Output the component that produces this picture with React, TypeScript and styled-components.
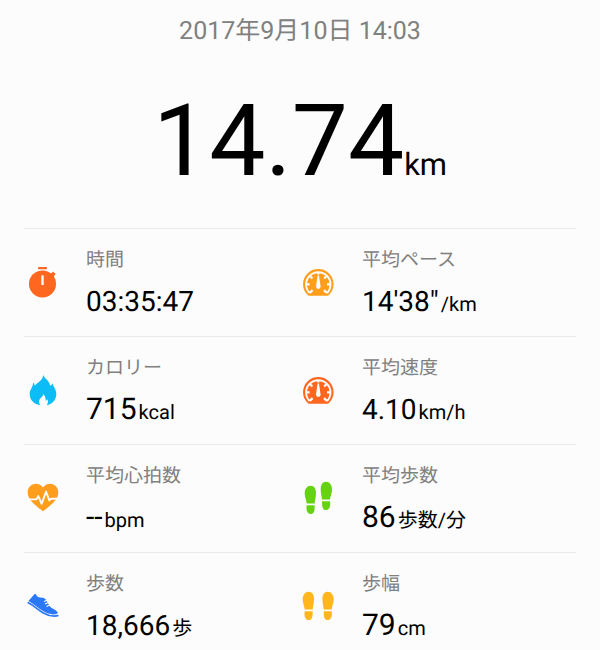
import React from "react";
import styled, { createGlobalStyle } from "styled-components";

const GlobalStyle = createGlobalStyle`
  * { box-sizing: border-box; }
  body {
    margin: 0;
    background: #fcfcfc;
    font-family: Roboto, "Noto Sans CJK JP", sans-serif;
    text-rendering: geometricPrecision;
    color: #000;
  }
`;

const Page = styled.main`
  padding: 14px 24px 0;
`;

const Header = styled.header`
  display: flex;
  flex-direction: column;
  align-items: center;
`;

const DateTime = styled.time`
  font-size: 25px;
  line-height: 36px;
  color: #808080;
`;

const Distance = styled.h1`
  display: flex;
  align-items: baseline;
  margin: 32px 0 26px;
  font-size: 100px;
  line-height: 120px;
  font-weight: 400;
`;

const DistanceUnit = styled.span`
  font-size: 31px;
  line-height: 1;
`;

const Stats = styled.dl`
  display: grid;
  grid-template-columns: 1fr 1fr;
  margin: 0;
`;

const Stat = styled.div`
  display: grid;
  grid-template-columns: 36px 1fr;
  column-gap: 26px;
  align-items: start;
  padding: 16px 0;
  border-top: 1px solid #e9e9e9;

  &:nth-last-child(-n + 2) {
    padding-bottom: 0;
  }
`;

const Icon = styled.svg`
  grid-row: 1 / 3;
  width: 36px;
  height: 36px;
  margin-top: 20px;
`;

const Label = styled.dt`
  font-size: 19px;
  line-height: 30px;
  color: #808080;
`;

const Value = styled.dd<{ $large?: boolean }>`
  display: flex;
  align-items: baseline;
  gap: 2px;
  margin: 8px 0 0;
  font-size: ${(p) => (p.$large ? 30 : 28)}px;
  line-height: 37px;
`;

const Unit = styled.span`
  font-size: 20px;
  line-height: 1;
`;

const BG = "#fcfcfc";

const Stopwatch = () => (
  <Icon viewBox="0 0 36 36" aria-hidden="true">
    <circle cx="18.5" cy="18.9" r="13.5" fill="#ff6620" />
    <rect x="14" y="2" width="9" height="2.3" rx="0.8" fill="#ff6620" />
    <path d="M26 9.5 29.4 7.2 31 8.8 28.8 12.4Z" fill="#ff6620" stroke="#ff6620" strokeLinejoin="round" />
    <rect x="17.3" y="10.3" width="2.4" height="9.7" rx="0.6" fill={BG} />
  </Icon>
);

const Gauge = ({ color }: { color: string }) => (
  <Icon viewBox="0 0 36 36" aria-hidden="true">
    <path d="M8.6 30.7C5.2 28 3 24 3 19.3a15.3 15.3 0 0 1 30.6 0C33.6 24 31.4 28 28 30.7Z" fill={color} />
    <path d="M9.6 28A12.2 12.2 0 1 1 27 28" fill="none" stroke={BG} strokeWidth="1.9" />
    <path
      d="M6.6 19.4H9.6M27 19.4H30M10.2 11.3 12.4 13.5M26.4 11.3 24.2 13.5M18.3 7V9.4M9.8 27.9 12.6 25.1M26.8 27.9 24 25.1"
      stroke={BG}
      strokeWidth="2.2"
      fill="none"
    />
    <path d="M17.6 10.5h1.4L20.6 21.6a2.3 2.3 0 1 1-4.6 0Z" fill={BG} />
  </Icon>
);

const Flame = () => (
  <Icon viewBox="0 0 36 36" aria-hidden="true">
    <path
      fill="#0bbcf6"
      d="M19.3 1.7C19.8 5.2 25.8 7.4 26.1 12.8 27.4 12.3 28.2 11.6 28.6 10.3 29 13.6 32.3 16.2 32.3 21 32.3 26.8 28.5 31 22.7 32.3 24.2 30.3 24.3 28.2 23.3 26.2 22.7 27.1 22.2 27.5 21.6 27.7 21.9 25 21 22.8 19.3 21 19 24.3 15.1 25.2 15 28.5 15 30.2 15.6 31.3 16.7 32.3 10 31.4 5.7 27 5.7 21 5.7 16.3 9.2 14.2 9 9.8 10 10.5 10.7 11.6 10.8 12.8 13.5 9.2 19.2 7 19.3 1.7Z"
    />
  </Icon>
);

const HeartRate = () => (
  <Icon viewBox="0 0 36 36" aria-hidden="true">
    <path
      fill="#ff9d1d"
      d="M19 30.3C13.8 25.8 3.7 19.6 3.7 11.4 3.7 6.2 7.4 2.7 11.8 2.7 14.8 2.7 17.4 4.2 19 6.6 20.6 4.2 23.2 2.7 26.2 2.7 30.6 2.7 34.3 6.2 34.3 11.4 34.3 19.6 24.2 25.8 19 30.3Z"
    />
    <path
      d="M3 18.4H12.4L14.3 15 17.6 22.8 22.1 10.6 25.3 19.4 27 17.8H35"
      fill="none"
      stroke={BG}
      strokeWidth="1.9"
      strokeLinejoin="round"
    />
  </Icon>
);

const footPath =
  "M2 17.8C1.8 14.6 0 12 0 7.6 0 3.2 2.4 0 6 0 9.6 0 11.3 3.2 11.3 7.4 11.3 11.6 10.3 14.4 10 17.8ZM2 19.5 9.9 19.5C10.2 24.6 9.5 28.3 6.2 28.3 2.6 28.3 1.2 24.6 2 19.5Z";

interface FeetProps {
  color: string;
  left: string;
  right: string;
}

const Feet = ({ color, left, right }: FeetProps) => (
  <Icon viewBox="0 0 36 36" fill={color} aria-hidden="true">
    <path d={footPath} transform={left} />
    <path d={footPath} transform={right} />
  </Icon>
);

const Shoe = () => (
  <Icon viewBox="0 0 36 36" aria-hidden="true">
    <path
      fill="#2a78fa"
      d="M4.4 12 10.4 5.3C11 4.7 12 4.9 12.3 5.8 12.8 8.2 15.5 9 19.3 8.8L21.4 10 25.8 17.2C27 19.6 32.8 20.3 34 24.2 29.5 26.4 25 25.4 19.8 22.6 14.3 19.5 10 14.8 4.4 12Z"
    />
    <path d="M4.2 13.8C10 16.5 14 21 19.3 23.9 24.6 26.8 29.6 27.7 33.8 26.7" fill="none" stroke="#2a78fa" strokeWidth="1.7" strokeLinecap="round" />
    <path d="M20 12.6 23.2 11.2M21 15 24.6 13.4M22.5 17.4 26.2 15.8" stroke={BG} strokeWidth="1.1" />
  </Icon>
);

interface StatData {
  icon: React.ReactNode;
  label: string;
  value: string;
  unit?: string;
  large?: boolean;
}

const stats: StatData[] = [
  { icon: <Stopwatch />, label: "時間", value: "03:35:47" },
  { icon: <Gauge color="#ff9d1d" />, label: "平均ペース", value: "14'38\"", unit: "/km" },
  { icon: <Flame />, label: "カロリー", value: "715", unit: "kcal", large: true },
  { icon: <Gauge color="#ff6620" />, label: "平均速度", value: "4.10", unit: "km/h" },
  { icon: <HeartRate />, label: "平均心拍数", value: "--", unit: "bpm", large: true },
  {
    icon: <Feet color="#66d312" left="translate(4.7 4.7)" right="translate(32 0.8) scale(-1 1)" />,
    label: "平均歩数",
    value: "86",
    unit: "歩数/分",
    large: true,
  },
  { icon: <Shoe />, label: "歩数", value: "18,666", unit: "歩" },
  {
    icon: <Feet color="#ffb61d" left="translate(2.7 2.7)" right="translate(33.7 2.7) scale(-1 1)" />,
    label: "歩幅",
    value: "79",
    unit: "cm",
    large: true,
  },
];

export default function App() {
  return (
    <>
      <GlobalStyle />
      <Page>
        <Header>
          <DateTime dateTime="2017-09-10T14:03">2017年9月10日 14:03</DateTime>
          <Distance>
            14.74<DistanceUnit>km</DistanceUnit>
          </Distance>
        </Header>
        <Stats>
          {stats.map((s) => (
            <Stat key={s.label}>
              {s.icon}
              <Label>{s.label}</Label>
              <Value $large={s.large}>
                <span>{s.value}</span>
                {s.unit && <Unit>{s.unit}</Unit>}
              </Value>
            </Stat>
          ))}
        </Stats>
      </Page>
    </>
  );
}
